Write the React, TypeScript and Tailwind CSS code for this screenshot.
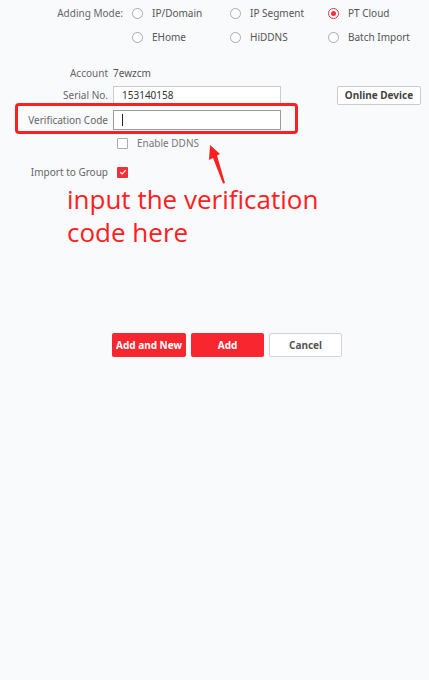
import React from "react";

const font = { fontFamily: '"Noto Sans", "Open Sans", Arial, sans-serif' };

function Radio({ label, checked }: { label: string; checked?: boolean }) {
  return (
    <div className="flex items-center w-[98px] h-[24px]">
      <span
        className={
          "w-[11px] h-[11px] rounded-full border flex items-center justify-center bg-white " +
          (checked ? "border-[#f0313a]" : "border-[#a9abaf]")
        }
      >
        {checked && <span className="w-[5px] h-[5px] rounded-full bg-[#f0313a]" />}
      </span>
      <span className="ml-[9px] text-[10px] text-[#555]">{label}</span>
    </div>
  );
}

export default function App() {
  return (
    <div className="relative w-[429px] min-h-[680px] bg-[#f9fafc] text-[#555]" style={font}>
      {/* Adding mode */}
      <div className="flex pt-[1px]">
        <div className="w-[123px] text-right text-[10px] text-[#666] h-[24px] leading-[24px]">Adding Mode:</div>
        <div className="ml-[9px] grid grid-cols-3">
          <Radio label="IP/Domain" />
          <Radio label="IP Segment" />
          <Radio label="PT Cloud" checked />
          <Radio label="EHome" />
          <Radio label="HiDDNS" />
          <Radio label="Batch Import" />
        </div>
      </div>

      {/* Form */}
      <div className="mt-[13px] flex flex-col">
        <div className="flex items-center h-[22px]">
          <div className="w-[108px] text-right text-[10px] text-[#666]">Account</div>
          <div className="ml-[5px] text-[10px] text-[#555]">7ewzcm</div>
        </div>
        <div className="flex items-center h-[23px]">
          <div className="w-[108px] text-right text-[10px] text-[#666]">Serial No.</div>
          <div className="ml-[5px] w-[168px] h-[19px] border border-[#c9cbcf] bg-white flex items-center px-[8px] text-[10px] text-[#333]">
            153140158
          </div>
          <div className="ml-[56px] w-[84px] h-[19px] border border-[#c9cbcf] bg-white rounded-[2px] flex items-center justify-center text-[10px] font-bold text-[#444]">
            Online Device
          </div>
        </div>
        <div className="flex items-center h-[24px] mt-[1px]">
          <div className="w-[108px] text-right text-[10px] text-[#666]">Verification Code</div>
          <div className="ml-[5px] w-[168px] h-[20px] border border-[#9a9ca0] bg-white flex items-center px-[8px]">
            <span className="w-[1px] h-[12px] bg-[#222]" />
          </div>
        </div>
        <div className="flex items-center h-[22px]">
          <div className="ml-[117px] w-[11px] h-[11px] border border-[#a9abaf] bg-white rounded-[1px]" />
          <div className="ml-[9px] text-[10px] text-[#777]">Enable DDNS</div>
        </div>
        <div className="flex items-center h-[24px] mt-[6px]">
          <div className="w-[108px] text-right text-[10px] text-[#666]">Import to Group</div>
          <div className="ml-[9px] w-[11px] h-[11px] bg-[#f0313a] rounded-[1px] flex items-center justify-center">
            <svg width="8" height="8" viewBox="0 0 8 8">
              <path d="M1.3 4.2 L3.2 6 L6.8 2.2" stroke="white" strokeWidth="1.2" fill="none" />
            </svg>
          </div>
        </div>
      </div>

      {/* Annotation text */}
      <div className="ml-[67px] -mt-[1px] text-[26px] leading-[33px] text-[#fe2020]" style={{ fontFamily: '"Open Sans", "Noto Sans", sans-serif' }}>
        <div>input the verification</div>
        <div>code here</div>
      </div>

      {/* Buttons */}
      <div className="mt-[84px] flex ml-[112px] gap-[5px]">
        <div className="w-[74px] h-[24px] bg-[#f7262f] rounded-[2px] flex items-center justify-center text-[10px] font-bold text-white">
          Add and New
        </div>
        <div className="w-[73px] h-[24px] bg-[#f7262f] rounded-[2px] flex items-center justify-center text-[10px] font-bold text-white">
          Add
        </div>
        <div className="w-[73px] h-[24px] bg-white border border-[#d2d4d8] rounded-[2px] flex items-center justify-center text-[10px] font-bold text-[#555]">
          Cancel
        </div>
      </div>

      {/* Red highlight box */}
      <div className="absolute left-[15px] top-[103px] w-[283px] h-[31px] border-[3px] border-[#fe2020] rounded-[4px]" />

      {/* Arrow */}
      <svg className="absolute left-[200px] top-[140px]" width="40" height="50" viewBox="0 0 40 50">
        <path d="M10 5 L20 14 L17 15.5 L25 43 L23 43.5 L13 18 L9 20 Z" fill="#fe2020" />
      </svg>
    </div>
  );
}
